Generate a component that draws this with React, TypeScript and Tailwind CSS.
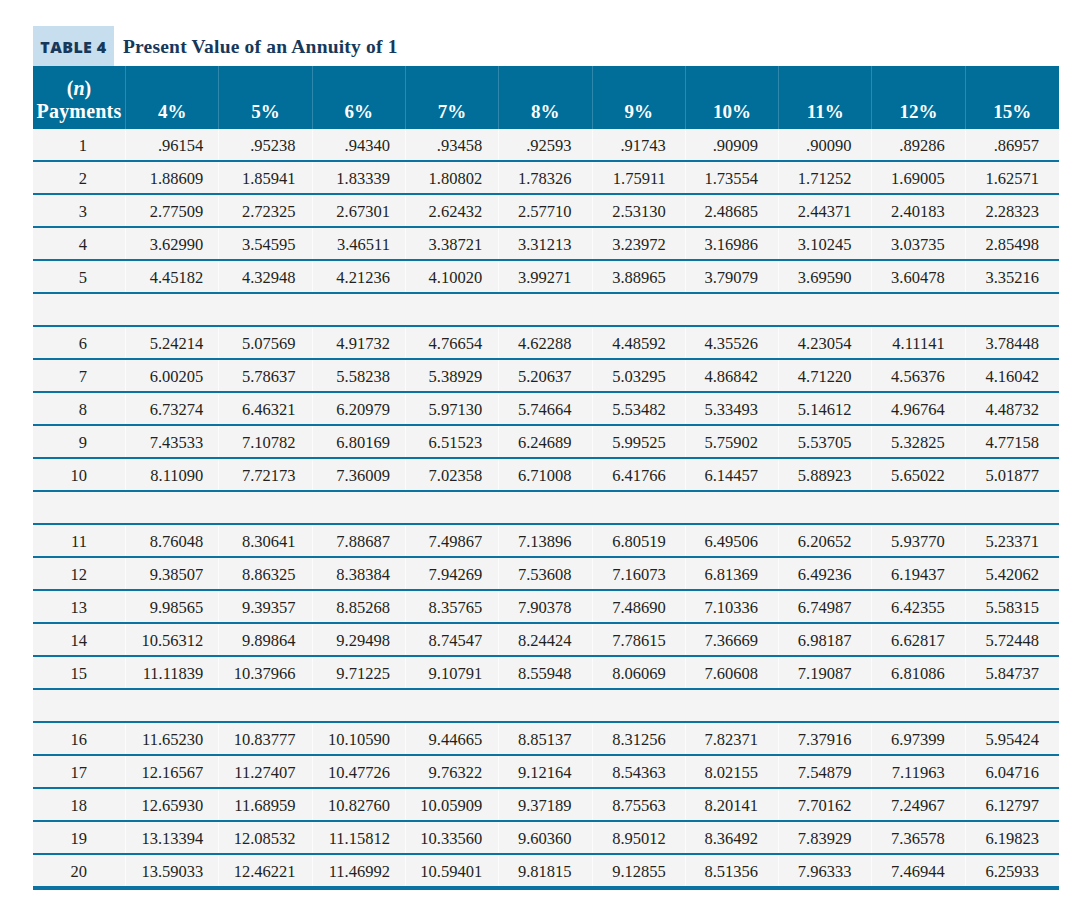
import React from "react";

const rates = ["4%", "5%", "6%", "7%", "8%", "9%", "10%", "11%", "12%", "15%"];

const pads = [
  "pr-[15px]",
  "pr-[16px]",
  "pr-[15px]",
  "pr-[16px]",
  "pr-[20px]",
  "pr-[19px]",
  "pr-[20px]",
  "pr-[20px]",
  "pr-[20px]",
  "pr-[20px]",
];

const data: string[][] = [
  [".96154", ".95238", ".94340", ".93458", ".92593", ".91743", ".90909", ".90090", ".89286", ".86957"],
  ["1.88609", "1.85941", "1.83339", "1.80802", "1.78326", "1.75911", "1.73554", "1.71252", "1.69005", "1.62571"],
  ["2.77509", "2.72325", "2.67301", "2.62432", "2.57710", "2.53130", "2.48685", "2.44371", "2.40183", "2.28323"],
  ["3.62990", "3.54595", "3.46511", "3.38721", "3.31213", "3.23972", "3.16986", "3.10245", "3.03735", "2.85498"],
  ["4.45182", "4.32948", "4.21236", "4.10020", "3.99271", "3.88965", "3.79079", "3.69590", "3.60478", "3.35216"],
  ["5.24214", "5.07569", "4.91732", "4.76654", "4.62288", "4.48592", "4.35526", "4.23054", "4.11141", "3.78448"],
  ["6.00205", "5.78637", "5.58238", "5.38929", "5.20637", "5.03295", "4.86842", "4.71220", "4.56376", "4.16042"],
  ["6.73274", "6.46321", "6.20979", "5.97130", "5.74664", "5.53482", "5.33493", "5.14612", "4.96764", "4.48732"],
  ["7.43533", "7.10782", "6.80169", "6.51523", "6.24689", "5.99525", "5.75902", "5.53705", "5.32825", "4.77158"],
  ["8.11090", "7.72173", "7.36009", "7.02358", "6.71008", "6.41766", "6.14457", "5.88923", "5.65022", "5.01877"],
  ["8.76048", "8.30641", "7.88687", "7.49867", "7.13896", "6.80519", "6.49506", "6.20652", "5.93770", "5.23371"],
  ["9.38507", "8.86325", "8.38384", "7.94269", "7.53608", "7.16073", "6.81369", "6.49236", "6.19437", "5.42062"],
  ["9.98565", "9.39357", "8.85268", "8.35765", "7.90378", "7.48690", "7.10336", "6.74987", "6.42355", "5.58315"],
  ["10.56312", "9.89864", "9.29498", "8.74547", "8.24424", "7.78615", "7.36669", "6.98187", "6.62817", "5.72448"],
  ["11.11839", "10.37966", "9.71225", "9.10791", "8.55948", "8.06069", "7.60608", "7.19087", "6.81086", "5.84737"],
  ["11.65230", "10.83777", "10.10590", "9.44665", "8.85137", "8.31256", "7.82371", "7.37916", "6.97399", "5.95424"],
  ["12.16567", "11.27407", "10.47726", "9.76322", "9.12164", "8.54363", "8.02155", "7.54879", "7.11963", "6.04716"],
  ["12.65930", "11.68959", "10.82760", "10.05909", "9.37189", "8.75563", "8.20141", "7.70162", "7.24967", "6.12797"],
  ["13.13394", "12.08532", "11.15812", "10.33560", "9.60360", "8.95012", "8.36492", "7.83929", "7.36578", "6.19823"],
  ["13.59033", "12.46221", "11.46992", "10.59401", "9.81815", "9.12855", "8.51356", "7.96333", "7.46944", "6.25933"],
];

type Row = { n: number; vals: string[] } | null;

const rows: Row[] = [];
data.forEach((vals, i) => {
  rows.push({ n: i + 1, vals });
  if ((i + 1) % 5 === 0 && i + 1 < 20) rows.push(null);
});

const serif = { fontFamily: '"Liberation Serif", "Times New Roman", serif' };

export default function App() {
  return (
    <div className="w-[1087px] h-[916px] bg-white pt-[26px] pl-[33px]" style={serif}>
      <div className="w-[1026px]">
        <div className="flex h-[40px] items-center">
          <div
            className="h-full w-[81px] bg-[#c6deee] flex items-center justify-center pt-[1px] text-[16px] font-extrabold text-[#16385a] tracking-[0.4px]"
            style={{ fontFamily: '"Open Sans", "Liberation Sans", sans-serif' }}
          >
            TABLE 4
          </div>
          <div className="pl-[9px] pt-[1px] text-[19.5px] font-bold text-[#16385a] tracking-[0.2px]">
            Present Value of an Annuity of 1
          </div>
        </div>
        <div className="grid grid-cols-[93px_repeat(10,1fr)] h-[63px] bg-[#016e99] text-white font-bold">
          <div className="flex flex-col items-center justify-end pb-[6px] text-[20px] leading-[23px] border-r border-[#2f87ab]">
            <span>
              (<i>n</i>)
            </span>
            <span className="tracking-[0.2px]">Payments</span>
          </div>
          {rates.map((r, i) => (
            <div
              key={r}
              className={`flex items-end justify-center pb-[6px] text-[19px] leading-[23px] ${i < 9 ? "border-r border-[#2f87ab]" : ""}`}
            >
              {r}
            </div>
          ))}
        </div>
        {rows.map((row, idx) => {
          const last = idx === rows.length - 1;
          return (
            <div
              key={idx}
              className={`grid grid-cols-[93px_repeat(10,1fr)] bg-[#f4f4f4] text-[#231f20] text-[16.5px] ${
                last ? "h-[35px] border-b-4" : "h-[33px] border-b-2"
              } border-[#0a73a1]`}
            >
              {row ? (
                <>
                  <div className="flex items-center justify-end pt-[3px] pr-[38px] border-r border-white/70">{row.n}</div>
                  {row.vals.map((v, j) => (
                    <div
                      key={j}
                      className={`flex items-center justify-end pt-[3px] ${pads[j]} ${j < 9 ? "border-r border-white/70" : ""}`}
                    >
                      {v}
                    </div>
                  ))}
                </>
              ) : null}
            </div>
          );
        })}
      </div>
    </div>
  );
}
